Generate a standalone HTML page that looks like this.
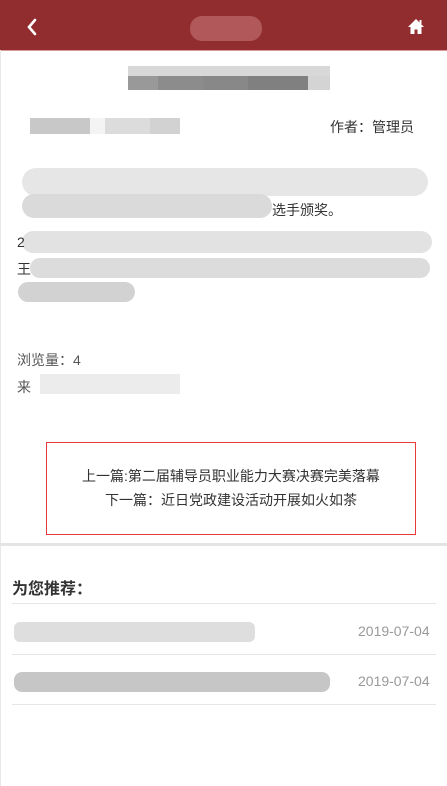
<!DOCTYPE html>
<html><head><meta charset="utf-8"><style>
*{margin:0;padding:0;box-sizing:border-box}
body{width:447px;height:786px;background:#fff;position:relative;overflow:hidden;font-family:"Liberation Sans","Noto Sans CJK SC",sans-serif;color:#333}
.a{position:absolute}
.hd{left:0;top:0;width:447px;height:50px;background:#922d2f}
.edge{left:0;top:50px;width:1px;height:736px;background:#e8e8e8}
.px{position:absolute;display:flex}
.px i{display:block;height:100%}
.t{font-size:14px;white-space:nowrap;color:#333}
.box{left:46px;top:442px;width:370px;height:93px;border:1px solid #e83a3a}
.sep{left:0;top:543px;width:447px;height:3px;background:#e4e4e4}
.ln{height:1px;background:#e6e6e6;left:12px;width:424px}
.dt{font-size:14px;color:#999}
</style></head><body>
<div class="a hd"></div>
<div class="a" style="left:0;top:50px;width:447px;height:1px;background:#d69a9b"></div>
<div class="a edge"></div>
<svg class="a" style="left:25px;top:18px" width="14" height="18" viewBox="0 0 14 18"><path d="M10 2 L4 9 L10 16" stroke="#fff" stroke-width="2.6" fill="none" stroke-linecap="round"/></svg>
<svg class="a" style="left:407px;top:18px" width="18" height="17" viewBox="0 0 18 17"><path d="M9 1 L1 9 H3.5 V16 H7.5 V11.5 H10.5 V16 H14.5 V9 H17 Z" fill="#fff"/><rect x="12.5" y="2" width="2" height="4" fill="#fff"/></svg>
<div class="a" style="left:190px;top:16px;width:72px;height:25px;border-radius:12px;background:#b0585a"></div>

<div class="px" style="left:128px;top:66px;width:202px;height:24px;flex-direction:column"><div style="display:flex;height:10px"><i style="width:202px;background:#d8d8d8"></i></div><div style="display:flex;height:14px"><i style="width:30px;background:#999"></i><i style="width:45px;background:#8c8c8c"></i><i style="width:45px;background:#888"></i><i style="width:60px;background:#808080"></i><i style="width:22px;background:#d4d4d4"></i></div></div>

<div class="px" style="left:30px;top:118px;width:150px;height:16px"><i style="width:60px;background:#c8c8c8"></i><i style="width:15px;background:#f4f4f4"></i><i style="width:45px;background:#dcdcdc"></i><i style="width:30px;background:#d2d2d2"></i></div>
<div class="a t" style="left:330px;top:117px">作者：管理员</div>

<div class="a" style="left:22px;top:168px;width:406px;height:28px;border-radius:14px;background:#e6e6e6"></div>
<div class="a" style="left:22px;top:194px;width:250px;height:24px;border-radius:12px;background:#dadada"></div>
<div class="a t" style="left:272px;top:200px">选手颁奖。</div>
<div class="a" style="left:22px;top:231px;width:410px;height:22px;border-radius:11px;background:#e2e2e2"></div>
<div class="a t" style="left:17px;top:234px">2</div>
<div class="a" style="left:30px;top:258px;width:400px;height:20px;border-radius:10px;background:#dcdcdc"></div>
<div class="a t" style="left:17px;top:259px">王</div>
<div class="a" style="left:18px;top:282px;width:117px;height:20px;border-radius:10px;background:#d2d2d2"></div>

<div class="a t" style="left:17px;top:350px;color:#555">浏览量：4</div>
<div class="a t" style="left:17px;top:377px;color:#555">来</div>
<div class="a" style="left:40px;top:374px;width:140px;height:20px;background:#ececec"></div>

<div class="a box"></div>
<div class="a t" style="left:46px;width:370px;top:466px;text-align:center;font-size:14px">上一篇:第二届辅导员职业能力大赛决赛完美落幕</div>
<div class="a t" style="left:46px;width:370px;top:490px;text-align:center;font-size:14px">下一篇：近日党政建设活动开展如火如茶</div>

<div class="a sep"></div>
<div class="a" style="left:12px;top:575px;font-size:16px;font-weight:bold;color:#333">为您推荐：</div>
<div class="a ln" style="top:603px"></div>
<div class="a" style="left:14px;top:622px;width:241px;height:20px;border-radius:6px;background:#dedede"></div>
<div class="a dt" style="left:358px;top:623px">2019-07-04</div>
<div class="a ln" style="top:654px"></div>
<div class="a" style="left:14px;top:672px;width:316px;height:20px;border-radius:8px;background:#c6c6c6"></div>
<div class="a dt" style="left:358px;top:673px">2019-07-04</div>
<div class="a ln" style="top:704px"></div>
</body></html>
